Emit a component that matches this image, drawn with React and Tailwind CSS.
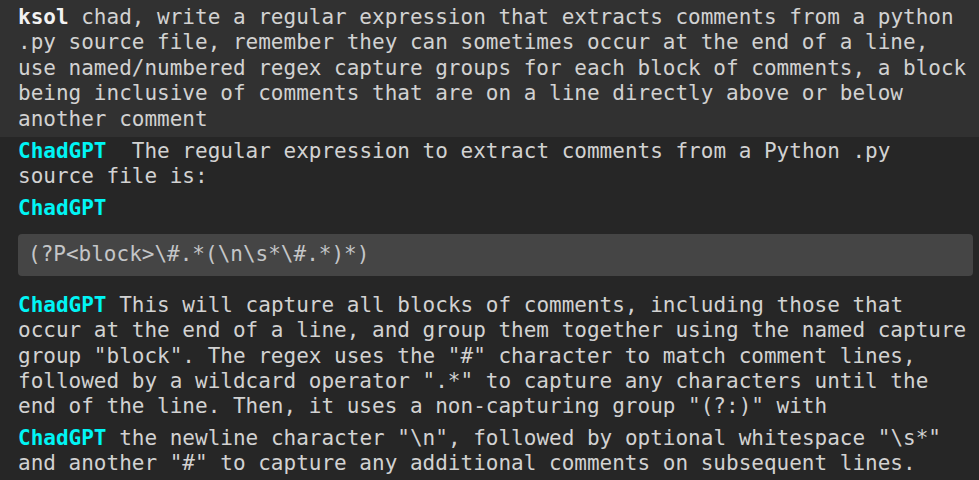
// Terminal-style chat log
const mono = { fontFamily: '"DejaVu Sans Mono", "Liberation Mono", monospace' };

const Bot = () => <span className="font-bold text-[#00f5f5]">ChadGPT</span>;

export default function App() {
  return (
    <div
      className="w-[979px] h-[480px] overflow-hidden bg-[#262626] text-[#d2d2d2] text-[21px] leading-[25.4px]"
      style={mono}
    >
      {/* user prompt */}
      <div className="bg-[#313131] pl-[18px] pr-[6px] pt-[5px] pb-[5px]">
        <span className="font-bold text-[#f2f2f2]">ksol</span> chad, write a regular expression that extracts
        comments from a python .py source file, remember they can sometimes occur at the end of a line, use
        named/numbered regex capture groups for each block of comments, a block being inclusive of comments that
        are on a line directly above or below another comment
      </div>

      <div className="flex flex-col gap-[6px] pl-[18px] pr-[6px] pt-[2px]">
        <div className="whitespace-pre-wrap">
          <Bot />{"  The regular expression to extract comments from a Python .py source file is:"}
        </div>

        <div>
          <Bot />
          <pre
            className="mt-[12.5px] mb-[11px] rounded-[4px] bg-[#454545] px-[10px] py-[8.3px] text-[#c4c6c8] text-[21px] leading-[25.4px]"
            style={mono}
          >
            {"(?P<block>\\#.*(\\n\\s*\\#.*)*)"}
          </pre>
        </div>

        <div>
          <Bot /> This will capture all blocks of comments, including those that occur at the end of a line, and
          group them together using the named capture group "block". The regex uses the "#" character to match
          comment lines, followed by a wildcard operator ".*" to capture any characters until the end of the
          line. Then, it uses a non-capturing group "(?:)" with
        </div>

        <div>
          <Bot /> the newline character "\n", followed by optional whitespace "\s*" and another "#" to capture
          any additional comments on subsequent lines.
        </div>
      </div>
    </div>
  );
}
